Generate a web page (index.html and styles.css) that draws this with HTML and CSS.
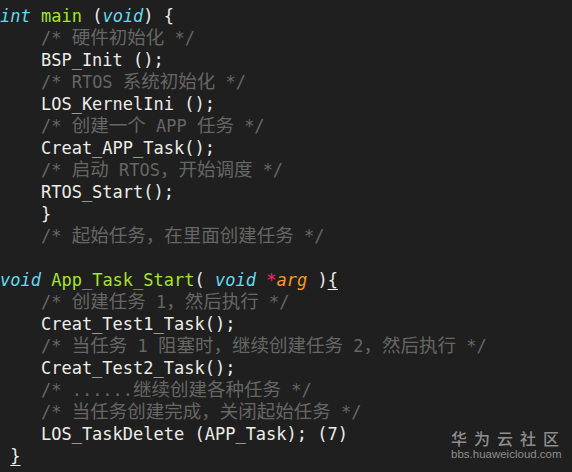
FILE: index.html
```html
<!DOCTYPE html>
<html lang="zh">
<head>
<meta charset="utf-8">
<link rel="stylesheet" href="styles.css">
</head>
<body>
<div class="page">
<pre class="code"><span class="kw">int</span> <span class="fn">main</span> (<span class="kw">void</span>) {
    <span class="cm">/* <span class="cjk">硬件初始化</span> */</span>
    BSP_Init ();
    <span class="cm">/* RTOS <span class="cjk">系统初始化</span> */</span>
    LOS_KernelIni ();
    <span class="cm">/* <span class="cjk">创建一个</span> APP <span class="cjk">任务</span> */</span>
    Creat_APP_Task();
    <span class="cm">/* <span class="cjk">启动</span> RTOS<span class="cjk">，开始调度</span> */</span>
    RTOS_Start();
    }
    <span class="cm">/* <span class="cjk">起始任务，在里面创建任务</span> */</span>

<span class="kw">void</span> <span class="fn">App_Task_Start</span>( <span class="kw">void</span> <span class="op">*</span><span class="arg">arg</span> )<span class="ul">{</span>
    <span class="cm">/* <span class="cjk">创建任务</span> 1<span class="cjk">，然后执行</span> */</span>
    Creat_Test1_Task();
    <span class="cm">/* <span class="cjk">当任务</span> 1 <span class="cjk">阻塞时，继续创建任务</span> 2<span class="cjk">，然后执行</span> */</span>
    Creat_Test2_Task();
    <span class="cm">/* ......<span class="cjk">继续创建各种任务</span> */</span>
    <span class="cm">/* <span class="cjk">当任务创建完成，关闭起始任务</span> */</span>
    LOS_TaskDelete (APP_Task); (7)
 <span class="ul">}</span></pre>
<div class="mark">
  <div class="mark-cn">华为云社区</div>
  <div class="mark-url">bbs.huaweicloud.com</div>
</div>
</div>
</body>
</html>
```
FILE: styles.css
```css
html, body {
  margin: 0;
  padding: 0;
  background: #1f1f1f;
  width: 572px;
  height: 472px;
  overflow: hidden;
}
.page {
  position: relative;
  width: 572px;
  height: 472px;
}
.code {
  margin: 0;
  padding: 5px 0 0 0;
  font-family: "DejaVu Sans Mono", "Liberation Mono", "Noto Sans CJK SC", monospace;
  font-size: 17px;
  line-height: 22px;
  color: #ecece8;
  white-space: pre;
}
.cjk {
  font-family: "Noto Sans CJK SC", sans-serif;
  font-size: 18.5px;
  line-height: 0;
}
.kw {
  color: #66d9ef;
  font-style: italic;
}
.fn { color: #a6e22e; }
.op { color: #f92672; }
.arg { color: #fd971f; font-style: italic; }
.cm { color: #666664; }
.ul {
  text-decoration: underline;
  text-underline-offset: 3px;
}
.mark {
  position: absolute;
  left: 451px;
  top: 428px;
  color: #8e8e8e;
  font-family: "Noto Sans CJK SC", sans-serif;
}
.mark-cn {
  font-size: 16px;
  line-height: 20px;
  letter-spacing: 7px;
  font-weight: 500;
}
.mark-url {
  font-family: "Liberation Sans", Arial, sans-serif;
  font-size: 11.5px;
  line-height: 13px;
}
```
